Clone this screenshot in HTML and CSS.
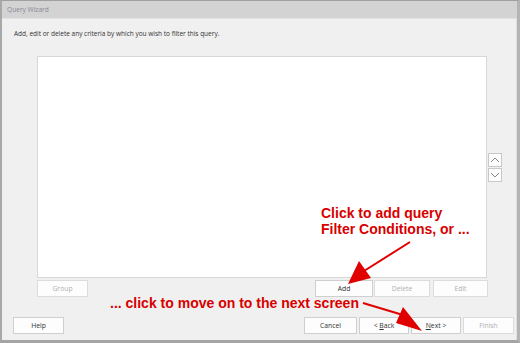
FILE: index.html
```html
<!DOCTYPE html>
<html lang="en">

<head>
    <meta charset="UTF-8">
    <meta name="viewport" content="width=device-width, initial-scale=1.0">
    <title>Query Wizard</title>
    <link rel="stylesheet" href="styles.css">
</head>

<body>
    <div class="window">
        <div class="title-bar">Query Wizard</div>
        <div class="content">
            <p class="intro">Add, edit or delete any criteria by which you wish to filter this query.</p>

            <!-- criteria list + move buttons -->
            <div class="list-area">
                <div class="criteria-list"></div>
                <div class="move-btns">
                    <button class="move"><svg width="10" height="6" viewBox="0 0 10 6"><path d="M1 5 L5 1 L9 5" fill="none" stroke="#8a8a8a" stroke-width="1"/></svg></button>
                    <button class="move"><svg width="10" height="6" viewBox="0 0 10 6"><path d="M1 1 L5 5 L9 1" fill="none" stroke="#8a8a8a" stroke-width="1"/></svg></button>
                </div>
            </div>

            <div class="list-btns">
                <button class="btn btn-group" disabled>Group</button>
                <button class="btn btn-add">Add</button>
                <button class="btn btn-delete" disabled>Delete</button>
                <button class="btn btn-edit" disabled>Edit</button>
            </div>

            <div class="nav-btns">
                <button class="btn btn-help">Help</button>
                <button class="btn btn-cancel">Cancel</button>
                <button class="btn btn-back">&lt; <u>B</u>ack</button>
                <button class="btn btn-next"><u>N</u>ext &gt;</button>
                <button class="btn btn-finish" disabled>Finish</button>
            </div>
        </div>

        <!-- annotations -->
        <div class="note note-add">Click to add query<br>Filter Conditions, or ...</div>
        <div class="note note-next">... click to move on to the next screen</div>
        <svg class="arrows" width="520" height="343" viewBox="0 0 520 343">
            <line x1="410" y1="242" x2="364" y2="271" stroke="#e00000" stroke-width="2"/>
            <polygon points="348,284 359,261 371,278" fill="#e00000"/>
            <line x1="363" y1="303" x2="403" y2="315" stroke="#e00000" stroke-width="2"/>
            <polygon points="422,331 396,323 403,307" fill="#e00000"/>
        </svg>
    </div>
</body>

</html>
```

FILE: styles.css
```css
body,
p {
    margin: 0;
    padding: 0;
}

body {
    font-family: "Open Sans", "Liberation Sans", sans-serif;
    background: #a8a8a8;
}

.window {
    position: relative;
    width: 520px;
    height: 343px;
    box-sizing: border-box;
    border-top: 1px solid #a0a0a0;
    border-left: 2px solid #a8a8a8;
    border-right: 3px solid #b4b4b4;
    border-bottom: 3px solid #a4a4a4;
    background: #f0f0f0;
    overflow: hidden;
}

.title-bar {
    height: 17px;
    line-height: 17px;
    padding-left: 5px;
    background: #d3d3d3;
    border-bottom: 1px solid #e2e2e2;
    color: #8a8a98;
    font-size: 6.6px;
}

.content {
    height: 321px;
    border-right: 1px solid #e0e0e0;
}

.intro {
    padding: 10px 0 0 12px;
    height: 14px;
    line-height: 9px;
    font-size: 6.5px;
    color: #333;
}

.list-area {
    display: flex;
    margin: 13px 0 0 35px;
}

.criteria-list {
    width: 448px;
    height: 220px;
    background: #fff;
    border: 1px solid #d8d8d8;
}

.move-btns {
    display: flex;
    flex-direction: column;
    gap: 1px;
    align-self: center;
    margin: 0 0 0 1px;
}

.move {
    width: 14px;
    height: 14px;
    padding: 0;
    display: flex;
    align-items: center;
    justify-content: center;
    background: #fdfdfd;
    border: 1px solid #c8c8c8;
}

.btn {
    height: 17px;
    padding: 0;
    background: #fdfdfd;
    border: 1px solid #cfcfcf;
    font-family: "Open Sans", "Liberation Sans", sans-serif;
    font-size: 6.8px;
    color: #333;
}

.btn:disabled {
    color: #b0b0b0;
    border-color: #dcdcdc;
}

.list-btns {
    display: flex;
    margin: 2px 0 0 35px;
}

.btn-group {
    width: 51px;
}

.btn-add {
    width: 58px;
    margin-left: 227px;
}

.btn-delete {
    width: 56px;
    margin-left: 1px;
}

.btn-edit {
    width: 55px;
    margin-left: 3px;
}

.nav-btns {
    display: flex;
    margin: 20px 0 0 11px;
}

.btn-help {
    width: 51px;
}

.btn-cancel {
    width: 53px;
    margin-left: 240px;
}

.btn-back {
    width: 50px;
    margin-left: 2px;
}

.btn-next {
    width: 50px;
    margin-left: 2px;
}

.btn-finish {
    width: 51px;
    margin-left: 2px;
}

.note {
    position: absolute;
    color: #d80000;
    font-family: "Liberation Sans", Arial, sans-serif;
    font-weight: bold;
    font-size: 14px;
    line-height: 16px;
}

.note-add {
    left: 319px;
    top: 204px;
}

.note-next {
    left: 108px;
    top: 294px;
}

.arrows {
    position: absolute;
    left: -2px;
    top: -1px;
}
```
